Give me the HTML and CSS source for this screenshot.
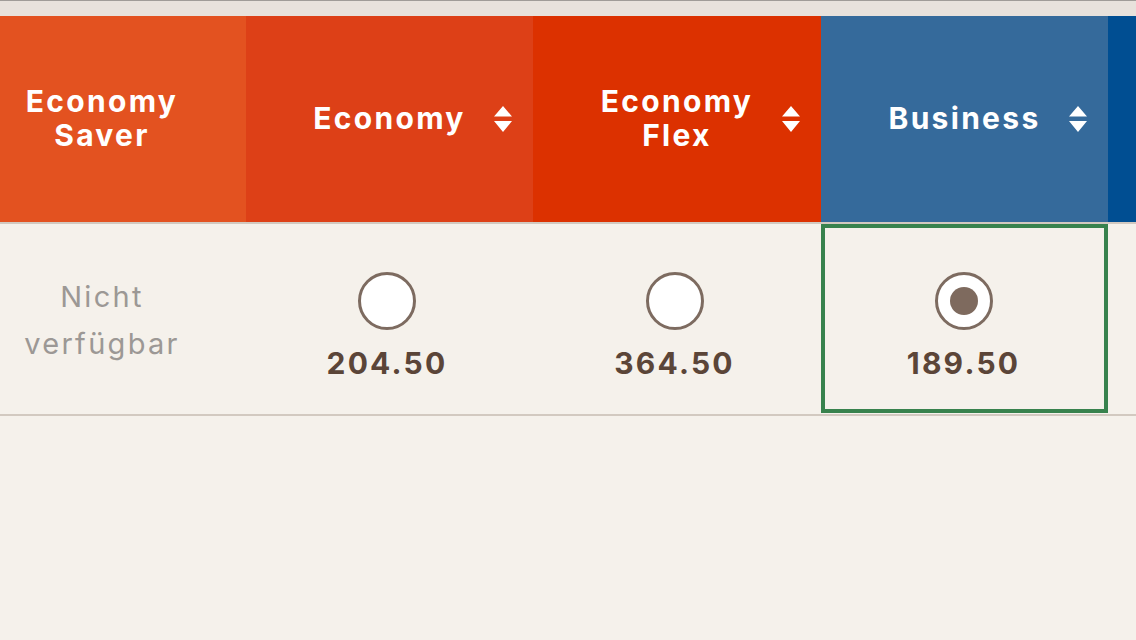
FILE: index.html
```html
<!DOCTYPE html>
<html lang="de">
<head>
<meta charset="utf-8">
<title>Tarife</title>
<link rel="stylesheet" href="styles.css">
</head>
<body>
<div class="topbar"></div>
<div class="fares">
  <div class="head-row">
    <div class="hcell c-saver"><span class="label">Economy<br>Saver</span></div>
    <div class="hcell c-eco"><span class="label">Economy</span>
      <svg class="sort" viewBox="0 0 18 26" width="18" height="26"><path d="M9 0 L18 10.5 L0 10.5 Z M0 15 L18 15 L9 26 Z" fill="#fff"/></svg>
    </div>
    <div class="hcell c-flex"><span class="label">Economy<br>Flex</span>
      <svg class="sort" viewBox="0 0 18 26" width="18" height="26"><path d="M9 0 L18 10.5 L0 10.5 Z M0 15 L18 15 L9 26 Z" fill="#fff"/></svg>
    </div>
    <div class="hcell c-bus"><span class="label">Business</span>
      <svg class="sort" viewBox="0 0 18 26" width="18" height="26"><path d="M9 0 L18 10.5 L0 10.5 Z M0 15 L18 15 L9 26 Z" fill="#fff"/></svg>
    </div>
    <div class="hcell c-first"></div>
  </div>
  <div class="body-row">
    <div class="bcell c-saver"><span class="na">Nicht<br>verfügbar</span></div>
    <div class="bcell c-eco"><span class="radio"></span><span class="price">204.50</span></div>
    <div class="bcell c-flex"><span class="radio"></span><span class="price">364.50</span></div>
    <div class="bcell c-bus selected"><span class="radio checked"></span><span class="price">189.50</span></div>
    <div class="bcell c-first"></div>
  </div>
</div>
</body>
</html>
```

FILE: styles.css
```css
* { box-sizing: border-box; }
html, body { margin: 0; padding: 0; }
body {
  background: #f5f1eb;
  font-family: Inter, "Noto Sans", sans-serif;
  width: 1136px;
  height: 640px;
  overflow: hidden;
}
.topbar {
  height: 16px;
  background: #e8e2dc;
  border-top: 1px solid #a09c98;
}
.head-row {
  display: flex;
  height: 208px;
  border-bottom: 2px solid #d2c9c0;
}
.hcell {
  position: relative;
  display: flex;
  align-items: center;
  justify-content: center;
  padding-bottom: 3px;
  color: #fff;
  font-weight: 700;
  font-size: 30px;
  line-height: 34px;
  letter-spacing: 2.3px;
  text-align: center;
}
.c-saver { width: 246px; padding-right: 42px; }
.c-eco { width: 287px; }
.c-flex { width: 288px; }
.c-bus { width: 287px; }
.c-first { width: 28px; }
.hcell.c-saver { background: #e35220; }
.hcell.c-eco { background: #dd4017; }
.hcell.c-flex { background: #dc3100; }
.hcell.c-bus { background: #356a9b; }
.hcell.c-first { background: #004e92; }
.sort {
  position: absolute;
  right: 21px;
  top: 90px;
}
.body-row {
  display: flex;
  height: 192px;
  border-bottom: 2px solid #d2c9c0;
}
.bcell {
  display: flex;
  flex-direction: column;
  align-items: center;
  justify-content: flex-start;
  padding-top: 48px;
  padding-right: 5px;
}
.bcell.c-saver {
  justify-content: center;
  padding-top: 2px;
  padding-bottom: 0;
  padding-right: 42px;
}
.na {
  color: #9c9895;
  font-size: 29px;
  line-height: 47px;
  text-align: center;
  letter-spacing: 2.3px;
  font-weight: 400;
}
.radio {
  width: 58px;
  height: 58px;
  border-radius: 50%;
  background: #fff;
  border: 3px solid #7d6b60;
  display: flex;
  align-items: center;
  justify-content: center;
}
.radio.checked::after {
  content: "";
  width: 28px;
  height: 28px;
  border-radius: 50%;
  background: #7e6a5e;
}
.price {
  margin-top: 16px;
  color: #5b4538;
  font-weight: 700;
  font-size: 30px;
  line-height: 34px;
  letter-spacing: 2.2px;
}
.bcell.selected {
  height: 189px;
  border: 4px solid #38824d;
  padding-top: 44px;
  padding-right: 2px;
}
```
